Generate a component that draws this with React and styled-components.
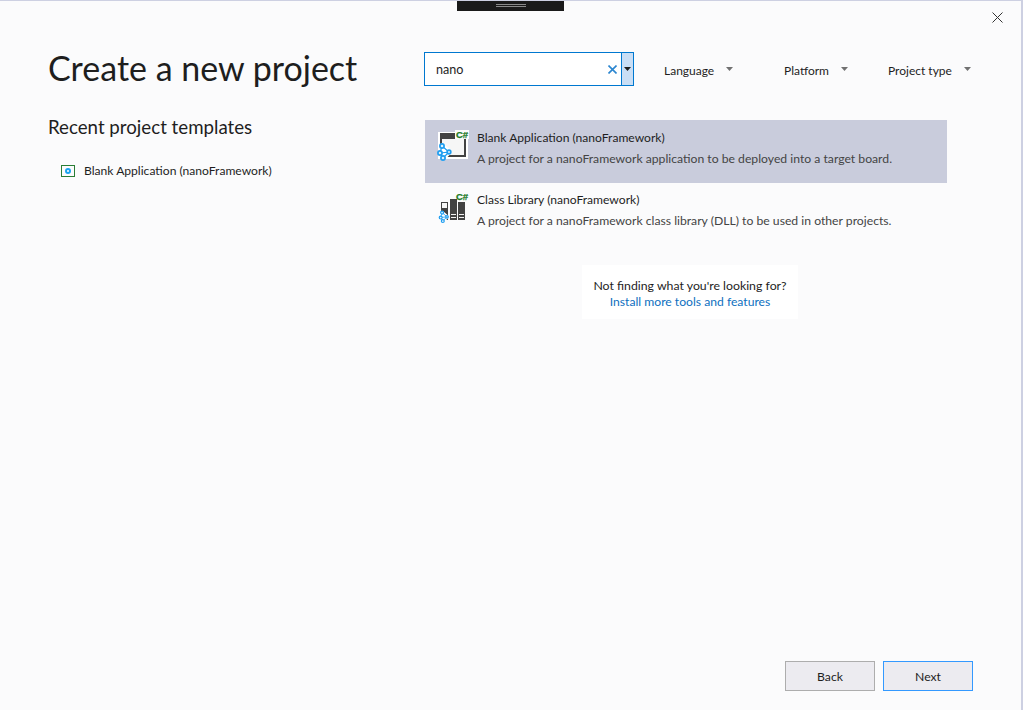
import styled, { createGlobalStyle } from "styled-components";

const Global = createGlobalStyle`
  html, body { margin: 0; padding: 0; }
  body { background: #fbfbfc; font-family: Lato, "Open Sans", sans-serif; }
`;

function CSharp() {
  return (
    <text x="21" y="9" fontFamily="Liberation Sans, sans-serif" fontWeight="700" fontSize="9.5" fill="#1a7a24" stroke="#1a7a24" strokeWidth="0.25">
      C#
    </text>
  );
}

function Nodes() {
  return (
    <g>
      <path d="M7 17L5 24L8 29L14 23Z" stroke="#fff" strokeWidth="5" strokeLinejoin="round" fill="#fff" />
      <path d="M7 17L5 24L8 29M7 17L14 23L5 24M14 23L8 29" stroke="#1e9df0" strokeWidth="1.2" fill="none" />
      <g stroke="#1e9df0" strokeWidth="1.7" fill="#dff1fd">
        <circle cx="7" cy="17" r="2.1" />
        <circle cx="5" cy="24" r="2.1" />
        <circle cx="14" cy="23" r="1.8" />
        <circle cx="8" cy="29" r="2.1" />
      </g>
    </g>
  );
}

function AppIcon() {
  return (
    <svg width="34" height="34" viewBox="0 0 34 34">
      <rect x="3" y="3" width="30" height="27" fill="#fff" />
      <rect x="5" y="4" width="26" height="24" fill="#424242" />
      <rect x="7" y="10" width="22" height="16" fill="#f6f6f6" />
      <rect x="20" y="1" width="14" height="9" fill="#fbfbfc" />
      <CSharp />
      <Nodes />
    </svg>
  );
}

function LibraryIcon() {
  return (
    <svg width="34" height="34" viewBox="0 0 34 34">
      <rect x="6" y="11" width="7" height="18" fill="#424242" />
      <rect x="7" y="12" width="5" height="5" fill="#f6f6f6" />
      <rect x="15" y="8" width="7" height="21" fill="#424242" />
      <rect x="23" y="11" width="7" height="18" fill="#424242" />
      <path d="M16 23.5h5M16 26.5h5M24 23.5h5M24 26.5h5" stroke="#f0f0f0" strokeWidth="1" />
      <CSharp />
      <g transform="translate(2.2 9.7) scale(0.7)">
        <Nodes />
      </g>
    </svg>
  );
}

function Caret({ dark }) {
  return (
    <svg width="7" height="4" viewBox="0 0 7 4">
      <path d="M0 0H7L3.5 4Z" fill={dark ? "#1e1e1e" : "#717171"} />
    </svg>
  );
}

const templates = [
  {
    name: "Blank Application (nanoFramework)",
    text: "A project for a nanoFramework application to be deployed into a target board.",
    icon: <AppIcon />,
    selected: true,
  },
  {
    name: "Class Library (nanoFramework)",
    text: "A project for a nanoFramework class library (DLL) to be used in other projects.",
    icon: <LibraryIcon />,
  },
];

export default function App() {
  return (
    <Page>
      <Global />
      <Handle>
        <Grip />
      </Handle>
      <BackWindowEdge />
      <CloseButton aria-label="Close">
        <svg width="11" height="11" viewBox="0 0 11 11">
          <path d="M0.5 0.5L10.5 10.5M10.5 0.5L0.5 10.5" stroke="#333" strokeWidth="1" fill="none" />
        </svg>
      </CloseButton>
      <Columns>
        <Left>
          <Title>Create a new project</Title>
          <Recent>Recent project templates</Recent>
          <RecentRow>
            <RecentIcon />
            <span>Blank Application (nanoFramework)</span>
          </RecentRow>
        </Left>
        <Right>
          <Filters>
            <Search>
              <SearchField>
                <SearchText>nano</SearchText>
                <svg width="9" height="9" viewBox="0 0 9 9">
                  <path d="M0.5 0.5L8.5 8.5M8.5 0.5L0.5 8.5" stroke="#2b86d0" strokeWidth="1.6" fill="none" />
                </svg>
              </SearchField>
              <SearchDrop>
                <Caret dark />
              </SearchDrop>
            </Search>
            <Filter $w={120}>
              Language
              <Caret />
            </Filter>
            <Filter $w={104}>
              Platform
              <Caret />
            </Filter>
            <Filter>
              Project type
              <Caret />
            </Filter>
          </Filters>
          <List>
            {templates.map((t) => (
              <Item key={t.name} $selected={t.selected}>
                {t.icon}
                <ItemBody>
                  <ItemName>{t.name}</ItemName>
                  <ItemText>{t.text}</ItemText>
                </ItemBody>
              </Item>
            ))}
          </List>
          <Hint>
            <HintText>Not finding what you're looking for?</HintText>
            <HintLink>Install more tools and features</HintLink>
          </Hint>
        </Right>
      </Columns>
      <Footer>
        <Button>Back</Button>
        <Button $primary>Next</Button>
      </Footer>
    </Page>
  );
}

const Page = styled.div`
  position: relative;
  box-sizing: border-box;
  width: 1023px;
  height: 710px;
  overflow: hidden;
  background: #fbfbfc;
  border-top: 1px solid #cdd0e2;
  border-right: 2px solid #cdd0e2;
  display: flex;
  flex-direction: column;
  color: #1e1e1e;
`;

const Handle = styled.div`
  position: absolute;
  top: -1px;
  left: 457px;
  width: 107px;
  height: 11px;
  background: #1a1a1a;
  display: flex;
  justify-content: center;
  padding-top: 4px;
  box-sizing: border-box;
`;

const Grip = styled.div`
  width: 30px;
  height: 1px;
  border-top: 1px solid #8a8a8a;
  border-bottom: 1px solid #8a8a8a;
`;

const BackWindowEdge = styled.div`
  position: absolute;
  top: 2px;
  right: -2px;
  width: 1px;
  height: 22px;
  background: #2a7fc8;
`;

const CloseButton = styled.button`
  position: absolute;
  top: 11px;
  right: 18px;
  padding: 0;
  border: 0;
  background: none;
  line-height: 0;
`;

const Columns = styled.div`
  flex: 1;
  display: flex;
  padding-top: 46px;
`;

const Left = styled.div`
  width: 424px;
  box-sizing: border-box;
  padding-left: 48px;
`;

const Title = styled.h1`
  margin: 0;
  font-size: 34px;
  font-weight: 400;
  line-height: 42px;
  color: #1e1e1e;
`;

const Recent = styled.h2`
  margin: 26px 0 0;
  font-size: 18.7px;
  font-weight: 400;
  line-height: 24px;
`;

const RecentRow = styled.div`
  display: flex;
  align-items: center;
  gap: 9px;
  margin: 24px 0 0 13px;
  font-size: 12.1px;
  line-height: 16px;
`;

const RecentIcon = styled.div`
  box-sizing: border-box;
  width: 14px;
  height: 12px;
  border: 1px solid #2a7d35;
  display: flex;
  align-items: center;
  justify-content: center;
  &::before {
    content: "";
    width: 6px;
    height: 6px;
    border-radius: 50%;
    background: #fff;
    border: 2px solid #1aa3f0;
    box-sizing: border-box;
  }
`;

const Right = styled.div`
  flex: 1;
  display: flex;
  flex-direction: column;
  align-items: flex-start;
`;

const Filters = styled.div`
  display: flex;
  align-items: center;
  height: 34px;
  margin-top: 5px;
  font-size: 12px;
`;

const Search = styled.div`
  display: flex;
  box-sizing: border-box;
  width: 210px;
  height: 34px;
  border: 1px solid #0078d0;
  margin-right: 30px;
`;

const SearchField = styled.div`
  flex: 1;
  background: #fff;
  display: flex;
  align-items: center;
  justify-content: space-between;
  padding: 0 4px 0 11px;
`;

const SearchText = styled.span`
  font-size: 12.6px;
`;

const SearchDrop = styled.div`
  width: 11px;
  background: #c9def5;
  border-left: 1px solid #0078d0;
  display: flex;
  align-items: center;
  justify-content: center;
`;

const Filter = styled.div`
  width: ${({ $w }) => ($w ? `${$w}px` : "auto")};
  padding-top: 2px;
  display: flex;
  align-items: center;
  gap: 12px;
  svg { margin-bottom: 2px; }
`;

const List = styled.div`
  margin-top: 34px;
  width: 522px;
  margin-left: 1px;
`;

const Item = styled.div`
  display: flex;
  align-items: flex-start;
  gap: 8px;
  height: ${({ $selected }) => ($selected ? "63px" : "62px")};
  padding: ${({ $selected }) => ($selected ? "8px" : "7px")} 0 0 10px;
  box-sizing: border-box;
  background: ${({ $selected }) => ($selected ? "#c9ccdc" : "transparent")};
  svg { margin-top: 1px; flex: none; }
`;

const ItemBody = styled.div`
  font-size: 12.1px;
  line-height: 20px;
`;

const ItemName = styled.div`
  color: #1e1e1e;
`;

const ItemText = styled.div`
  color: #444;
  font-size: 12.2px;
  margin-top: 1px;
`;

const Hint = styled.div`
  align-self: flex-start;
  margin: 20px 0 0 158px;
  width: 216px;
  height: 54px;
  background: #fff;
  box-sizing: border-box;
  padding-top: 13px;
  text-align: center;
  line-height: 16px;
`;

const HintText = styled.div`
  font-size: 12.3px;
`;

const HintLink = styled.div`
  font-size: 12.15px;
  color: #0e70c0;
`;

const Footer = styled.div`
  display: flex;
  justify-content: flex-end;
  gap: 8px;
  padding: 0 48px 19px 0;
`;

const Button = styled.button`
  width: 90px;
  height: 30px;
  box-sizing: border-box;
  background: #ecebf0;
  border: 1px solid ${({ $primary }) => ($primary ? "#3399ff" : "#adadad")};
  font: inherit;
  font-size: 12.2px;
  color: #1e1e1e;
  padding: 0;
`;
